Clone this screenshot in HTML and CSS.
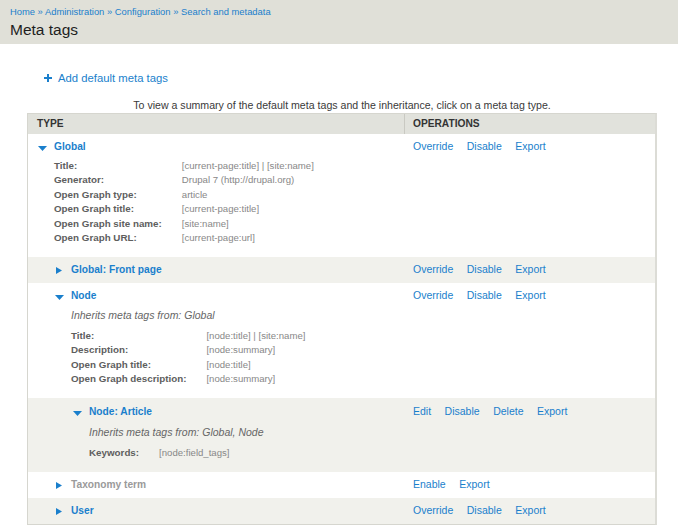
FILE: index.html
```html
<!DOCTYPE html>
<html lang="en">
<head>
<meta charset="utf-8">
<title>Meta tags</title>
<link rel="stylesheet" href="styles.css">
</head>
<body>
<header class="page-header">
  <nav class="breadcrumb"><a href="#">Home</a> » <a href="#">Administration</a> » <a href="#">Configuration</a> » <a href="#">Search and metadata</a></nav>
  <h1 class="page-title">Meta tags</h1>
</header>
<main class="content">
  <ul class="action-links">
    <li><a class="add-link" href="#"><svg class="plus" width="8" height="8" viewBox="0 0 8 8"><rect x="3" y="0" width="2" height="8" fill="currentColor"/><rect x="0" y="3" width="8" height="2" fill="currentColor"/></svg>Add default meta tags</a></li>
  </ul>
  <table class="meta-table">
    <caption>To view a summary of the default meta tags and the inheritance, click on a meta tag type.</caption>
    <thead>
      <tr><th class="col-type">TYPE</th><th class="col-ops">OPERATIONS</th></tr>
    </thead>
    <tbody>
      <tr>
        <td class="type-cell">
          <div class="type-item">
            <div class="type-title"><span class="toggle"><svg class="tri-down" width="9" height="5" viewBox="0 0 9 5"><polygon points="0,0 9,0 4.5,5" fill="currentColor"/></svg></span><a class="type-name" href="#">Global</a></div>
            <dl class="details">
              <dt>Title:</dt><dd>[current-page:title] | [site:name]</dd>
              <dt>Generator:</dt><dd>Drupal 7 (http://drupal.org)</dd>
              <dt>Open Graph type:</dt><dd>article</dd>
              <dt>Open Graph title:</dt><dd>[current-page:title]</dd>
              <dt>Open Graph site name:</dt><dd>[site:name]</dd>
              <dt>Open Graph URL:</dt><dd>[current-page:url]</dd>
            </dl>
          </div>
        </td>
        <td class="ops-cell"><ul class="ops"><li><a href="#">Override</a></li><li><a href="#">Disable</a></li><li><a href="#">Export</a></li></ul></td>
      </tr>
      <tr>
        <td class="type-cell">
          <div class="type-item level-1">
            <div class="type-title"><span class="toggle"><svg class="tri-right" width="6" height="7" viewBox="0 0 6 7"><polygon points="0,0 6,3.5 0,7" fill="currentColor"/></svg></span><a class="type-name" href="#">Global: Front page</a></div>
          </div>
        </td>
        <td class="ops-cell"><ul class="ops"><li><a href="#">Override</a></li><li><a href="#">Disable</a></li><li><a href="#">Export</a></li></ul></td>
      </tr>
      <tr>
        <td class="type-cell">
          <div class="type-item level-1">
            <div class="type-title"><span class="toggle"><svg class="tri-down" width="9" height="5" viewBox="0 0 9 5"><polygon points="0,0 9,0 4.5,5" fill="currentColor"/></svg></span><a class="type-name" href="#">Node</a></div>
            <p class="inherits">Inherits meta tags from: Global</p>
            <dl class="details">
              <dt>Title:</dt><dd>[node:title] | [site:name]</dd>
              <dt>Description:</dt><dd>[node:summary]</dd>
              <dt>Open Graph title:</dt><dd>[node:title]</dd>
              <dt>Open Graph description:</dt><dd>[node:summary]</dd>
            </dl>
          </div>
        </td>
        <td class="ops-cell"><ul class="ops"><li><a href="#">Override</a></li><li><a href="#">Disable</a></li><li><a href="#">Export</a></li></ul></td>
      </tr>
      <tr class="row-article">
        <td class="type-cell">
          <div class="type-item level-2">
            <div class="type-title"><span class="toggle"><svg class="tri-down" width="9" height="5" viewBox="0 0 9 5"><polygon points="0,0 9,0 4.5,5" fill="currentColor"/></svg></span><a class="type-name" href="#">Node: Article</a></div>
            <p class="inherits">Inherits meta tags from: Global, Node</p>
            <dl class="details">
              <dt>Keywords:</dt><dd>[node:field_tags]</dd>
            </dl>
          </div>
        </td>
        <td class="ops-cell"><ul class="ops"><li><a href="#">Edit</a></li><li><a href="#">Disable</a></li><li><a href="#">Delete</a></li><li><a href="#">Export</a></li></ul></td>
      </tr>
      <tr>
        <td class="type-cell">
          <div class="type-item level-1">
            <div class="type-title"><span class="toggle"><svg class="tri-right" width="6" height="7" viewBox="0 0 6 7"><polygon points="0,0 6,3.5 0,7" fill="currentColor"/></svg></span><a class="type-name disabled" href="#">Taxonomy term</a></div>
          </div>
        </td>
        <td class="ops-cell"><ul class="ops"><li><a href="#">Enable</a></li><li><a href="#">Export</a></li></ul></td>
      </tr>
      <tr>
        <td class="type-cell">
          <div class="type-item level-1">
            <div class="type-title"><span class="toggle"><svg class="tri-right" width="6" height="7" viewBox="0 0 6 7"><polygon points="0,0 6,3.5 0,7" fill="currentColor"/></svg></span><a class="type-name" href="#">User</a></div>
          </div>
        </td>
        <td class="ops-cell"><ul class="ops"><li><a href="#">Override</a></li><li><a href="#">Disable</a></li><li><a href="#">Export</a></li></ul></td>
      </tr>
    </tbody>
  </table>
</main>
</body>
</html>
```

FILE: styles.css
```css
* {
  box-sizing: border-box;
}

html,
body {
  margin: 0;
  padding: 0;
  background: #ffffff;
}

body {
  font-family: "Liberation Sans", Arial, Helvetica, sans-serif;
  color: #333333;
}

a {
  color: #1a7fcc;
  text-decoration: none;
}

.page-header {
  background: #e0e0d8;
  height: 44px;
  padding: 5px 10px 0;
}

.breadcrumb {
  font-size: 9.4px;
  line-height: 14px;
  color: #1a7fcc;
}

.page-title {
  margin: 1px 0 0;
  font-size: 15.5px;
  font-weight: normal;
  line-height: 20px;
  color: #1e1e1e;
}

.content {
  padding: 0 21px 0 27px;
}

.action-links {
  list-style: none;
  margin: 26px 0 0 17px;
  padding: 0;
  font-size: 11.3px;
  line-height: 16px;
}

.add-link {
  display: inline-flex;
  align-items: center;
}

.plus {
  margin-right: 6px;
  display: block;
}

.meta-table {
  width: 630px;
  margin-top: 12px;
  border-collapse: separate;
  border-spacing: 0;
  border: 1px solid #d6d6cf;
  border-right: 2px solid #dcdcd6;
}

.meta-table caption {
  font-size: 10.6px;
  line-height: 14px;
  color: #3a3a3a;
  padding-bottom: 1px;
  text-align: center;
}

.meta-table th {
  background: #e1e2dc;
  height: 20px;
  padding: 0 9px;
  text-align: left;
  font-size: 10.2px;
  font-weight: bold;
  line-height: 20px;
  color: #333333;
}

.meta-table th.col-type {
  width: 376px;
}

.meta-table th.col-ops {
  border-left: 1px solid #c9c9c2;
  padding-left: 8px;
}

.meta-table tbody tr:nth-child(even) {
  background: #f1f1ec;
}

.meta-table td {
  padding: 6px 9px 7px;
  vertical-align: top;
}

.meta-table tr.row-article td {
  padding-top: 7px;
}

.type-item.level-1 {
  padding-left: 17px;
}

.type-item.level-2 {
  padding-left: 35px;
}

.type-title {
  display: flex;
  align-items: center;
  height: 13px;
  line-height: 13px;
  font-size: 10.2px;
  font-weight: bold;
}

.toggle {
  width: 10px;
  display: flex;
  justify-content: center;
  margin-right: 7px;
  color: #1a7fcc;
}

.toggle svg {
  display: block;
}

.tri-down {
  margin-top: 3px;
}

.tri-right {
  margin-top: 1px;
}

.type-name.disabled {
  color: #9a9a9a;
}

.inherits {
  margin: 6px 0 0 17px;
  font-style: italic;
  font-size: 10.5px;
  line-height: 14.4px;
  color: #666666;
}

.row-article .inherits {
  margin-top: 7px;
}

.details {
  display: grid;
  grid-template-columns: auto 1fr;
  column-gap: 20px;
  margin: 6px 0 5px 17px;
  font-size: 9.6px;
  line-height: 14.4px;
}

.details dt {
  font-weight: bold;
  font-size: 9.8px;
  color: #5e5e5e;
}

.details dd {
  margin: 0;
  color: #888888;
}

.ops {
  display: flex;
  gap: 13.5px;
  list-style: none;
  margin: 0;
  padding: 0;
  font-size: 10.5px;
  line-height: 13px;
}
```
